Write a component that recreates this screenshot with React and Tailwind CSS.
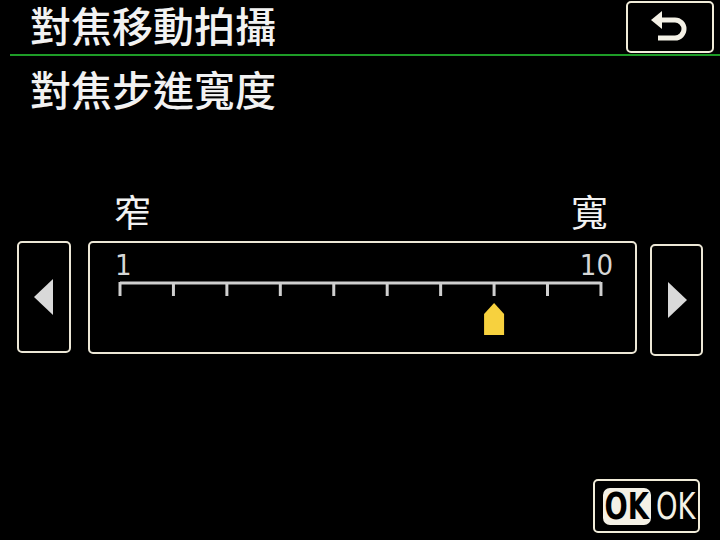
const CJK = { fontFamily: '"Noto Sans CJK TC", "Noto Sans CJK SC", sans-serif' };
const NARROW = { fontFamily: '"Liberation Sans Narrow", "DejaVu Sans Condensed", "Liberation Sans", sans-serif' };

const TICKS = Array.from({ length: 10 }, (_, i) => 30 + i * 53.44);
const CURRENT = 7;

function BackIcon() {
  return (
    <svg width="40" height="40" viewBox="0 0 40 40">
      <path d="M12 4 L1 13 L12 22 Z" fill="#f4f1e6" />
      <path d="M11 13 H25 a9 9 0 0 1 0 18 H8" fill="none" stroke="#f4f1e6" strokeWidth="5" />
    </svg>
  );
}

function Arrow({ dir }) {
  return (
    <svg width="20" height="36" viewBox="0 0 20 36">
      {dir === 'left' ? (
        <path d="M19 0 V36 L0 18 Z" fill="#d9d9d9" />
      ) : (
        <path d="M1 0 V36 L20 18 Z" fill="#d9d9d9" />
      )}
    </svg>
  );
}

function Scale() {
  const x = TICKS[CURRENT];
  return (
    <svg width="545" height="60" viewBox="0 0 545 60">
      <line x1={TICKS[0]} y1="3" x2={TICKS[9]} y2="3" stroke="#cfcfcf" strokeWidth="3" />
      {TICKS.map((t) => (
        <line key={t} x1={t} y1="2" x2={t} y2="16" stroke="#cfcfcf" strokeWidth="3" />
      ))}
      <path
        d={`M${x} 23 L${x + 10} 34 V55 H${x - 10} V34 Z`}
        fill="#f7d13e"
      />
    </svg>
  );
}

export default function App() {
  return (
    <div className="w-[720px] h-[540px] bg-black text-[#f2f2f2] overflow-hidden flex flex-col">
      {/* Header */}
      <div className="flex items-start justify-between pl-[30px] pr-[6px] pt-[1px] pb-[1px]">
        <h1 className="text-[41px] leading-[60px] -mt-[7px] -mb-[8px] font-medium whitespace-nowrap" style={CJK}>對焦移動拍攝</h1>
        <div className="w-[88px] h-[52px] border-2 border-[#f1ecd9] rounded-[5px] flex items-center justify-center">
          <BackIcon />
        </div>
      </div>
      <div className="ml-[10px] h-[2px] bg-[#1e9c27]" />

      <h2 className="pl-[30px] pt-[2px] text-[41px] leading-[60px] font-medium whitespace-nowrap" style={CJK}>對焦步進寬度</h2>

      {/* Narrow / wide labels */}
      <div className="flex justify-between pl-[114px] pr-[112px] mt-[71px] text-[37px] leading-[44px]" style={CJK}>
        <span>窄</span>
        <span>寬</span>
      </div>

      {/* Slider */}
      <div className="flex items-start pl-[17px] mt-[8px]">
        <div className="w-[54px] h-[112px] border-2 border-[#ece7d6] rounded-[5px] flex items-center justify-center">
          <Arrow dir="left" />
        </div>
        <div className="ml-[17px] w-[549px] h-[113px] border-2 border-[#ece7d6] rounded-[5px] flex flex-col">
          <div className="flex justify-between pl-[25px] pr-[22px] pt-[7px] text-[29px] leading-[30px] text-[#d6d6d6]" style={NARROW}>
            <span>1</span>
            <span>10</span>
          </div>
          <Scale />
        </div>
        <div className="ml-[13px] mt-[3px] w-[53px] h-[112px] border-2 border-[#ece7d6] rounded-[5px] flex items-center justify-center">
          <Arrow dir="right" />
        </div>
      </div>

      {/* OK button */}
      <div className="flex justify-end pr-[20px] mt-auto mb-[7px]">
        <div className="w-[107px] h-[54px] border-2 border-[#f1ecd9] rounded-[5px] flex items-center pl-[8px] gap-[2px]">
          <div className="bg-[#f4f1e6] rounded-[7px] h-[37px] w-[48px] flex items-center justify-center">
            <span className="text-black text-[38px] leading-none font-bold scale-x-[0.8]" style={NARROW}>OK</span>
          </div>
          <span className="text-[#f4f1e6] text-[38px] leading-none scale-x-[0.8] -ml-[2px]" style={NARROW}>OK</span>
        </div>
      </div>
    </div>
  );
}
